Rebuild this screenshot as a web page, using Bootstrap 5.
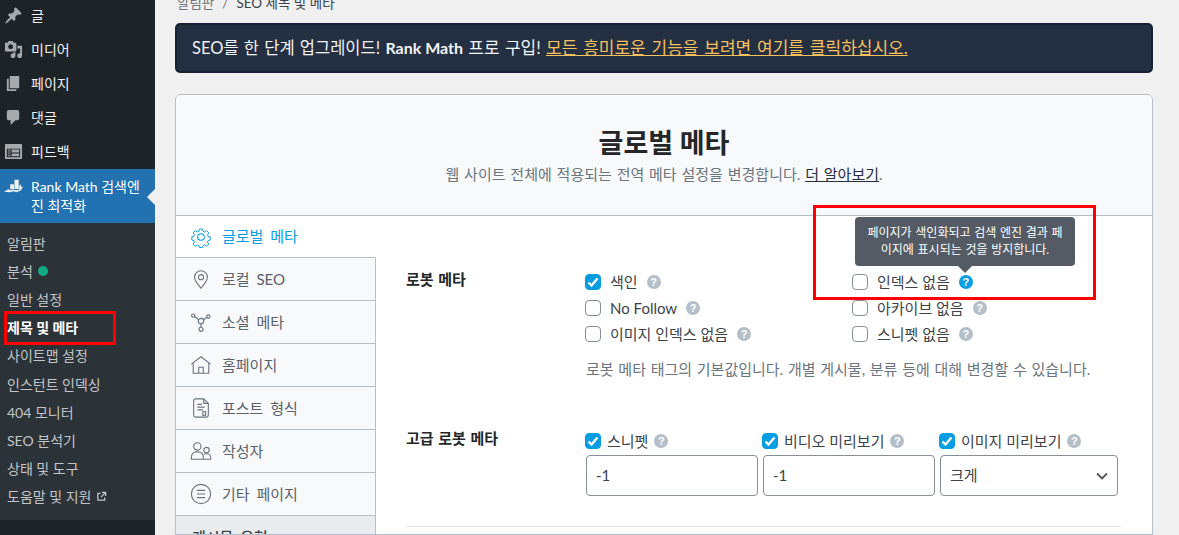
<!DOCTYPE html>
<html lang="ko">
<head>
  <meta charset="utf-8" />
  <meta name="viewport" content="width=device-width, initial-scale=1" />
  <title>글로벌 메타 - Rank Math</title>
  <link href="https://cdn.jsdelivr.net/npm/bootstrap@5.3.2/dist/css/bootstrap.min.css" rel="stylesheet" />
  <style>
    html, body { height: 535px; overflow: hidden; }
    body {
      background: #f0f0f1;
      color: #3c434a;
      font-family: Lato, "Noto Sans CJK KR", sans-serif;
      font-size: 14px;
      position: relative;
    }
    .page-wrap { height: 535px; overflow: hidden; }
    .wp-side { width: 155px; height: 535px; background: #1d2327; flex: none; position: relative; color: #f0f0f1; }
    .wp-item { height: 34px; display: flex; align-items: center; gap: 8px; padding: 0 0 2px 4px; font-size: 14px; }
    .wp-item svg { width: 19px; height: 19px; fill: #a7aaad; flex: none; }
    .wp-first { margin-top: -1px; }
    .wp-active { background: #2271b1; color: #fff; height: 54px; padding-bottom: 0; line-height: 19px; position: relative; }
    .wp-active svg { fill: #f0f0f1; align-self: flex-start; margin-top: 8px; }
    .wp-active::after {
      content: ""; position: absolute; right: 0; top: 20px;
      border: 8px solid transparent; border-right-color: #f0f0f1; border-left-width: 0;
    }
    .wp-sub { background: #2c3338; height: 297px; padding-top: 6px; font-size: 14px; color: #c3c4c7; }
    .wp-sub div { height: 28.2px; display: flex; align-items: center; padding-left: 7px; gap: 5px; white-space: nowrap; }
    .wp-sub .cur { color: #fff; font-weight: 700; }
    .dot-green { width: 10px; height: 10px; border-radius: 50%; background: #10ac84; }
    .main-area { width: 1024px; height: 535px; overflow: hidden; padding: 0 26px 0 20px; }
    .crumb { height: 23px; font-size: 13.5px; padding-left: 2px; line-height: 16px; color: #72777c; display: flex; gap: 8px; transform: translateY(-5px); }
    .crumb b { font-weight: 400; color: #3c434a; }
    .promo {
      height: 50px; background: #252f42; border: 2px solid #1a2130; border-radius: 5px;
      color: #f0f3f7; font-size: 16.5px; padding-left: 15px; white-space: nowrap; word-spacing: 1px;
    }
    .promo a { color: #f9c25c; font-size: 17px; word-spacing: 1.5px; }
    .promo strong { font-weight: 700; font-size: 16px; word-spacing: 0; }
    .promo-buy { font-size: 17px; }
    .meta-card { margin-top: 21px; border: 1px solid #b5bfc9; border-radius: 6px 6px 0 0; background: #fff; height: 441px; overflow: hidden; }
    .meta-head { height: 121px; background: #f8f9fa; border-bottom: 1px solid #b5bfc9; text-align: center; padding-top: 30px; }
    .meta-head h1 { font-size: 27px; font-weight: 700; color: #242628; margin: 0; line-height: 36px; }
    .meta-head p { margin: 3px 0 0; font-size: 15px; line-height: 20px; color: #6a7580; word-spacing: 1px; }
    .meta-head a { color: #242f42; }
    .tab-col { width: 200px; flex: none; }
    .tab-row {
      height: 43px; display: flex; align-items: center; gap: 10px; padding-left: 14px;
      background: #f8f9fa; border-bottom: 1px solid #b5bfc9; border-right: 1px solid #b5bfc9; color: #5a626b; font-size: 15px; word-spacing: 3px;
    }
    .tab-row svg { width: 22px; height: 22px; fill: none; stroke: #6b7280; stroke-width: 1.2; flex: none; }
    .tab-row.on { background: #fff; color: #069de3; border-right-color: #fff; height: 42px; }
    .tab-row.on svg { stroke: #069de3; }
    .tab-row.grp { background: #e9ecef; border-right-color: #b5bfc9; font-weight: 500; color: #3c434a; padding-left: 16px; }
    .pane { flex: 1; padding: 0 31px 0 30px; position: relative; }
    .field-name { width: 180px; flex: none; font-weight: 700; font-size: 15px; word-spacing: 1px; color: #242628; margin-top: -3px; }
    .opt-grid { display: grid; grid-template-columns: 267px auto; row-gap: 4px; }
    .opt { height: 22px; display: flex; align-items: center; gap: 9px; color: #3c434a; font-size: 15px; white-space: nowrap; }
    .tick {
      width: 16px; height: 16px; flex: none; border: 1px solid #868e96; border-radius: 4px; background: #fff; display: block; margin-left: -1px;
    }
    .tick.yes { background: #069de3; border-color: #069de3; }
    .tick svg { display: block; width: 14px; height: 14px; }
    .hint { width: 14px; height: 14px; border-radius: 50%; background: #b5bfc9; color: #fff; font-size: 11px; font-weight: 700; line-height: 14px; text-align: center; flex: none; font-family: "Liberation Sans", sans-serif; }
    .hint.lit { background: #069de3; }
    .field-note { color: #6a7580; font-size: 15px; margin: 14px 0 0; line-height: 20px; white-space: nowrap; word-spacing: .9px; }
    .adv-col { flex: none; margin-right: 5px; }
    .adv-col .opt { gap: 6px; margin-bottom: 3px; }
    .adv-input { height: 41px; border: 1px solid #868e96; border-radius: 4px; background: #fff; padding: 0 9px; display: flex; align-items: center; color: #3c434a; font-size: 15px; justify-content: space-between; }
    .rule { border-top: 1px solid #e5e5e5; margin-top: 30px; }
    .tip {
      position: absolute; left: 855px; top: 217px; width: 220px; height: 49px; background: #545b64; border-radius: 4px;
      color: #fff; font-size: 12px; line-height: 17px; text-align: center; padding: 7px 2px; word-spacing: .6px;
    }
    .tip::after {
      content: ""; position: absolute; left: 103px; top: 49px;
      border: 7px solid transparent; border-top-color: #545b64; border-bottom-width: 0;
    }
    .red-box { position: absolute; border: 3px solid #f00; pointer-events: none; }
    .red-a { left: 4px; top: 311px; width: 112px; height: 34px; }
    .red-b { left: 813px; top: 205px; width: 283px; height: 95px; }
  </style>
</head>
<body>
  <div class="d-flex page-wrap">
    <!-- wp 사이드바 -->
    <div class="wp-side">
      <div class="wp-item wp-first"><svg viewBox="0 0 20 20"><path d="M10.44 3.02l1.82-1.82 6.36 6.35-1.83 1.82c-1.05-.68-2.48-.57-3.41.36l-.75.75c-.92.93-1.04 2.35-.35 3.41l-1.83 1.82-2.41-2.41-2.8 2.79c-.42.42-3.38 2.71-3.8 2.29s1.86-3.39 2.28-3.81l2.79-2.79L4.1 9.36l1.83-1.82c1.05.69 2.48.57 3.4-.36l.75-.75c.93-.92 1.05-2.35.36-3.41z"/></svg><span>글</span></div>
      <div class="wp-item"><svg viewBox="0 0 20 20"><path d="M13 11V4c0-.55-.45-1-1-1h-1.67L9 1H5L3.67 3H2c-.55 0-1 .45-1 1v7c0 .55.45 1 1 1h10c.55 0 1-.45 1-1zM7 4.500c1.380 0 2.500 1.120 2.500 2.500S8.380 9.500 7 9.500 4.500 8.380 4.500 7 5.620 4.500 7 4.500zM14 6h5v10.500c0 1.380-1.120 2.500-2.500 2.500S14 17.880 14 16.500s1.120-2.500 2.500-2.500c.17 0 .34.020.5.050V9h-3V6zm-4 8.050V13h2v3.500c0 1.380-1.120 2.500-2.500 2.500S7 17.880 7 16.500 8.120 14 9.500 14c.17 0 .34.020.5.050z"/></svg><span>미디어</span></div>
      <div class="wp-item"><svg viewBox="0 0 20 20"><path d="M6 15V2h10v13H6zm-1 1h8v2H3V5h2v11z"/></svg><span>페이지</span></div>
      <div class="wp-item"><svg viewBox="0 0 20 20"><path d="M5 2h9c1.100 0 2 .9 2 2v7c0 1.100-.9 2-2 2h-2l-5 5v-5H5c-1.100 0-2-.9-2-2V4c0-1.100.9-2 2-2z"/></svg><span>댓글</span></div>
      <div class="wp-item"><svg viewBox="0 0 20 20"><path d="M2 2h16c.55 0 1 .45 1 1v14c0 .55-.45 1-1 1H2c-.55 0-1-.45-1-1V3c0-.55.45-1 1-1zm15 14V7H3v9h14zM4 8v1h3V8H4zm4 0v3h8V8H8zm-4 2v1h3v-1H4zm0 2v1h3v-1H4zm4 0v3h8v-3H8zm-4 2v1h3v-1H4z"/></svg><span>피드백</span></div>
      <div class="wp-item wp-active"><svg viewBox="0 0 20 20"><path d="M6.500 7.500h4V13h-4zM11 3h4.500v9.500H11zM16 9l1.500-1.500.5 3 2-.5-3 3-1-.5zM0 15.500l5-3 1 1.500 4-.5 3 .5 4-1 3-3-2 4-5 2-3-1-4 1z"/></svg><span>Rank Math 검색엔<br>진 최적화</span></div>
      <div class="wp-sub">
        <div>알림판</div>
        <div>분석 <span class="dot-green"></span></div>
        <div>일반 설정</div>
        <div class="cur">제목 및 메타</div>
        <div>사이트맵 설정</div>
        <div>인스턴트 인덱싱</div>
        <div>404 모니터</div>
        <div>SEO 분석기</div>
        <div>상태 및 도구</div>
        <div>도움말 및 지원 <svg width="11" height="11" viewBox="0 0 12 12" fill="none" stroke="#c3c4c7" stroke-width="1.400"><path d="M5 2.500H2v7.500h7.500V7M6.500 1.500h4v4M10.500 1.500L5.500 6.500"/></svg></div>
      </div>
    </div>

    <!-- 본문 -->
    <div class="main-area">
      <div class="crumb"><span>알림판</span><span>/</span><b>SEO 제목 및 메타</b></div>
      <div class="promo d-flex align-items-center">
        <span>SEO를 한 단계 업그레이드! <strong>Rank Math</strong> <span class="promo-buy">프로 구입!</span> <a href="#">모든 흥미로운 기능을 보려면 여기를 클릭하십시오.</a></span>
      </div>

      <div class="meta-card">
        <div class="meta-head">
          <h1>글로벌 메타</h1>
          <p>웹 사이트 전체에 적용되는 전역 메타 설정을 변경합니다. <a href="#">더 알아보기</a>.</p>
        </div>
        <div class="d-flex">
          <div class="tab-col">
            <div class="tab-row on"><svg viewBox="0 0 24 24"><path d="M10 2.500h4l.6 2.800 1.900.8 2.400-1.600 2.800 2.800-1.600 2.400.8 1.900 2.600.6v4l-2.600.6-.8 1.900 1.600 2.400-2.800 2.800-2.400-1.600-1.900.8-.6 2.300h-4l-.6-2.300-1.900-.8-2.400 1.600-2.800-2.800 1.600-2.400-.8-1.900-2.400-.6v-4l2.400-.6.8-1.900-1.600-2.400 2.800-2.800 2.400 1.600 1.900-.8z" transform="translate(1.400 1.100) scale(.88)"/><circle cx="12" cy="12" r="3.600"/></svg><span>글로벌 메타</span></div>
            <div class="tab-row"><svg viewBox="0 0 24 24"><path d="M12 22c-3-3.500-7-8-7-12a7 7 0 0 1 14 0c0 4-4 8.500-7 12z"/><circle cx="12" cy="10" r="2.800"/></svg><span>로컬 SEO</span></div>
            <div class="tab-row"><svg viewBox="0 0 24 24"><circle cx="3.500" cy="5" r="1.800"/><circle cx="20" cy="6" r="1.800"/><circle cx="12" cy="11" r="3"/><circle cx="12" cy="20" r="2.200"/><path d="M5 6l4.500 3.500M18.300 7l-3.800 2.500M12 14v3.800"/></svg><span>소셜 메타</span></div>
            <div class="tab-row"><svg viewBox="0 0 24 24"><path d="M1.500 11L12 3l10.500 8M3.500 10v11h17V10M9.500 21v-6.500h5V21"/></svg><span>홈페이지</span></div>
            <div class="tab-row"><svg viewBox="0 0 24 24"><path d="M15 2H6a2 2 0 0 0-2 2v16a2 2 0 0 0 2 2h12a2 2 0 0 0 2-2V7zM15 2v5h5M8 8h5M8 11h8M8 14h6"/><rect x="14" y="16" width="3" height="4"/></svg><span>포스트 형식</span></div>
            <div class="tab-row"><svg viewBox="0 0 24 24"><circle cx="8" cy="7" r="4"/><circle cx="18" cy="11" r="3"/><path d="M1.500 21v-2.500A5.500 5.500 0 0 1 7 13h2a5.500 5.500 0 0 1 5.500 5.500V21zM15 15.500c.8-.4 1.500-.5 2.500-.5h1a4 4 0 0 1 4 4v2h-8"/></svg><span>작성자</span></div>
            <div class="tab-row"><svg viewBox="0 0 24 24"><circle cx="12" cy="12" r="10.500"/><path d="M7.500 8h9M7.500 12h9M7.500 16h9"/></svg><span>기타 페이지</span></div>
            <div class="tab-row grp"><span>게시물 유형</span></div>
          </div>

          <div class="pane">
            <div class="d-flex" style="padding-top: 55px">
              <div class="field-name">로봇 메타</div>
              <div class="flex-grow-1">
                <div class="opt-grid">
                  <div class="opt"><span class="tick yes"><svg viewBox="0 0 14 14" fill="none" stroke="#fff" stroke-width="2.400"><path d="M2.500 7.500l3 3 6-7"/></svg></span>색인 <span class="hint">?</span></div>
                  <div class="opt"><span class="tick"></span>인덱스 없음 <span class="hint lit">?</span></div>
                  <div class="opt"><span class="tick"></span>No Follow <span class="hint">?</span></div>
                  <div class="opt"><span class="tick"></span>아카이브 없음 <span class="hint">?</span></div>
                  <div class="opt"><span class="tick"></span>이미지 인덱스 없음 <span class="hint">?</span></div>
                  <div class="opt"><span class="tick"></span>스니펫 없음 <span class="hint">?</span></div>
                </div>
                <p class="field-note">로봇 메타 태그의 기본값입니다. 개별 게시물, 분류 등에 대해 변경할 수 있습니다.</p>
              </div>
            </div>

            <div class="d-flex" style="padding-top: 51px">
              <div class="field-name">고급 로봇 메타</div>
              <div class="d-flex">
                <div class="adv-col" style="width: 172px">
                  <div class="opt"><span class="tick yes"><svg viewBox="0 0 14 14" fill="none" stroke="#fff" stroke-width="2.400"><path d="M2.500 7.500l3 3 6-7"/></svg></span>스니펫 <span class="hint">?</span></div>
                  <div class="adv-input">-1</div>
                </div>
                <div class="adv-col" style="width: 172px">
                  <div class="opt"><span class="tick yes"><svg viewBox="0 0 14 14" fill="none" stroke="#fff" stroke-width="2.400"><path d="M2.500 7.500l3 3 6-7"/></svg></span>비디오 미리보기 <span class="hint">?</span></div>
                  <div class="adv-input">-1</div>
                </div>
                <div class="adv-col" style="width: 178px; margin-right: 0">
                  <div class="opt"><span class="tick yes"><svg viewBox="0 0 14 14" fill="none" stroke="#fff" stroke-width="2.400"><path d="M2.500 7.500l3 3 6-7"/></svg></span>이미지 미리보기 <span class="hint">?</span></div>
                  <div class="adv-input"><span>크게</span><svg width="12" height="8" viewBox="0 0 12 8" fill="none" stroke="#555" stroke-width="1.800"><path d="M1 1.500l5 5 5-5"/></svg></div>
                </div>
              </div>
            </div>
            <div class="rule"></div>
          </div>
        </div>
      </div>
    </div>
  </div>

  <div class="tip">페이지가 색인화되고 검색 엔진 결과 페<br>이지에 표시되는 것을 방지합니다.</div>
  <div class="red-box red-a"></div>
  <div class="red-box red-b"></div>

  <script src="https://cdn.jsdelivr.net/npm/bootstrap@5.3.2/dist/js/bootstrap.bundle.min.js"></script>
</body>
</html>
